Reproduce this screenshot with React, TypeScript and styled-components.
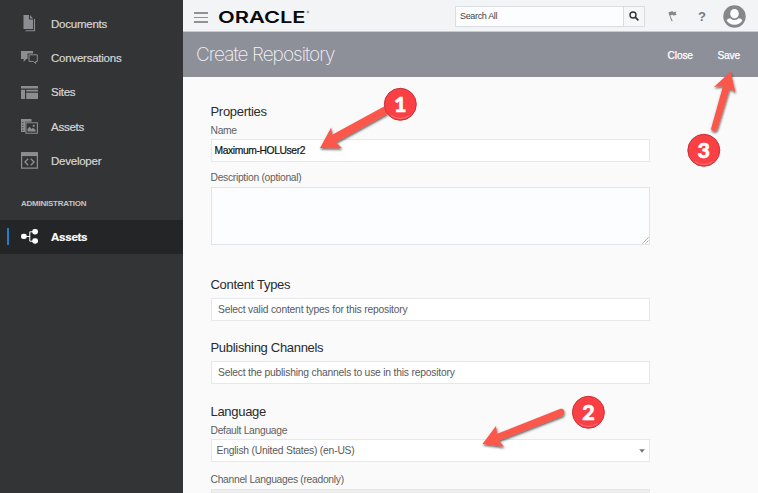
import React from 'react';
import styled, { createGlobalStyle, css } from 'styled-components';

const GlobalStyle = createGlobalStyle`
  * { box-sizing: border-box; }
  body { margin: 0; overflow: hidden; }
`;

const Page = styled.div`
  position: relative;
  display: flex;
  width: 758px;
  height: 493px;
  overflow: hidden;
  background: #fafafa;
  font-family: 'Liberation Sans', Arial, sans-serif;
`;

const Sidebar = styled.nav`
  width: 183px;
  flex: none;
  padding-top: 6.5px;
  background: #333435;
`;

const NavItem = styled.div<{ $active?: boolean }>`
  display: flex;
  align-items: center;
  height: 34.3px;
  color: #d6d6d7;
  font-size: 11.5px;
  letter-spacing: -0.24px;
  -webkit-text-stroke: 0.2px currentColor;
  ${(p) =>
    p.$active &&
    css`
      height: 34px;
      background: #242526;
      color: #fff;
      font-weight: bold;
    `}
`;

const Marker = styled.span<{ $on?: boolean }>`
  width: 2px;
  height: 17px;
  margin: 0 12px 0 7px;
  background: ${(p) => (p.$on ? '#2a7cc7' : 'transparent')};
`;

const IconBox = styled.span`
  display: flex;
  width: 17px;
  height: 17px;
  margin-right: 13px;
  svg { display: block; }
`;

const NavHeading = styled.div`
  height: 42px;
  padding: 21.5px 0 0 21px;
  color: #c4c5c6;
  font-size: 8px;
  line-height: 10px;
  font-weight: bold;
  letter-spacing: -0.25px;
`;

const Main = styled.main`
  flex: 1;
  display: flex;
  flex-direction: column;
  min-width: 0;
`;

const TopBar = styled.header`
  display: flex;
  align-items: center;
  height: 32px;
  flex: none;
  padding: 1px 12px 0 11px;
  background: #f3f4f6;
  border-bottom: 1px solid #c8cacf;
`;

const Menu = styled.div`
  display: flex;
  flex-direction: column;
  gap: 3px;
  width: 14px;
  margin: 3px 10px 0 0;
`;

const MenuLine = styled.span`
  height: 1.4px;
  background: #909296;
`;

const Brand = styled.div`
  display: flex;
  width: 237px;
  flex: none;
`;

const SearchBox = styled.div`
  display: flex;
  width: 190px;
  height: 21px;
  flex: none;
  background: #fcfdfe;
  border: 1px solid #d9dde1;
`;

const SearchText = styled.span`
  flex: 1;
  padding-left: 4px;
  color: #414447;
  font-size: 9px;
  line-height: 18px;
  letter-spacing: -0.34px;
`;

const SearchButton = styled.span`
  display: flex;
  align-items: center;
  justify-content: center;
  width: 21px;
  border-left: 1px solid #d9dde1;
  background: #f6f7f8;
`;

const TopIcons = styled.div`
  display: flex;
  align-items: center;
  flex: 1;
  justify-content: flex-end;
`;

const Help = styled.span`
  width: 8px;
  margin: 1px 17px 0 21px;
  color: #77797c;
  font-size: 13px;
  line-height: 14px;
  font-weight: bold;
`;

const TitleBar = styled.div`
  display: flex;
  align-items: center;
  height: 45px;
  flex: none;
  padding: 0 18px 0 13px;
  background: #8d8f99;
  color: #f4f4f6;
`;

const Title = styled.h1`
  flex: 1;
  margin: 0;
  font-family: Inter, 'Liberation Sans', sans-serif;
  font-size: 19px;
  font-weight: 200;
  line-height: 26px;
  letter-spacing: -0.95px;
  white-space: nowrap;
`;

const Action = styled.span`
  margin: 1px 0 0 24.5px;
  color: #fff;
  font-size: 10.2px;
  letter-spacing: -0.15px;
  -webkit-text-stroke: 0.25px currentColor;
`;

const Form = styled.section`
  width: 467px;
  padding: 27px 0 0 27.5px;
`;

const Heading = styled.h2<{ $gap?: number }>`
  margin: ${(p) => p.$gap ?? 0}px 0 0;
  color: #2a2b2c;
  font-size: 13px;
  font-weight: normal;
  line-height: 16px;
  letter-spacing: -0.3px;
`;

const Label = styled.div<{ $gap?: number }>`
  margin-top: ${(p) => p.$gap ?? 3}px;
  color: #5e5f61;
  font-size: 10.3px;
  line-height: 15px;
  padding-bottom: 1px;
  letter-spacing: -0.29px;
`;

const Field = styled.div<{ $inset?: number; $gap?: number; $dark?: boolean; $readonly?: boolean }>`
  display: flex;
  align-items: center;
  justify-content: space-between;
  height: 23px;
  margin-top: ${(p) => p.$gap ?? 0}px;
  padding: 0 4px 0 ${(p) => p.$inset ?? 3}px;
  background: ${(p) => (p.$readonly ? '#eee' : '#fff')};
  border: 1px solid #e6e8ea;
  color: ${(p) => (p.$dark ? '#111' : '#58595b')};
  font-size: 10.3px;
  letter-spacing: ${(p) => (p.$dark ? '-0.38px' : '-0.2px')};
  -webkit-text-stroke: ${(p) => (p.$dark ? '0.2px' : '0')} currentColor;
`;

const TextArea = styled.div`
  display: flex;
  align-items: flex-end;
  justify-content: flex-end;
  height: 58px;
  margin-top: 1px;
  padding: 0;
  background: #fcfdfe;
  border: 1px solid #e2e5e8;
`;

const Overlay = styled.svg`
  position: absolute;
  inset: 0;
  pointer-events: none;
`;

const G = '#8b8d90';

const DocumentsIcon = () => (
  <svg width="17" height="17" viewBox="0 0 17 17">
    <path d="M2.5 0H8v4.5h4V14H2.5zM9 0l3 3.5H9z" fill={G} />
    <path d="M13.5 4v11.8H4.5" fill="none" stroke={G} strokeWidth="1.1" />
  </svg>
);

const ConversationsIcon = () => (
  <svg width="17" height="17" viewBox="0 0 17 17">
    <path d="M0 2h12v2.6H6.6v5.3H5.3L2.7 13V9.9H0z" fill={G} />
    <path d="M8 5.8h8.3v6.6h-1.7v2.2l-2.2-2.2H8z" fill="none" stroke={G} strokeWidth="1" />
  </svg>
);

const SitesIcon = () => (
  <svg width="17" height="17" viewBox="0 0 17 17">
    <path d="M0 2h17v2.5H0zM0 5.7h4V15H0zM5.2 5.7H17v1.8H5.2zM5.2 8.7H17V15H5.2z" fill={G} />
  </svg>
);

const AssetsIcon = () => (
  <svg width="17" height="17" viewBox="0 0 17 17">
    <path d="M0 1h10.5v2.8H4.2V14H0z" fill={G} />
    <path d="M1.8 4v9" stroke="#333435" strokeWidth="1" strokeDasharray="1 1.6" />
    <path d="M4.9 4.7h11.5v10.6H4.9z" fill="#333435" stroke={G} strokeWidth="1.1" />
    <path d="M6.5 13.5V11l2-2.3 2 2.3 1.5-1.2 2.7 2.2v1.5z" fill={G} />
    <circle cx="12.7" cy="7.8" r="1.1" fill={G} />
  </svg>
);

const DeveloperIcon = () => (
  <svg width="17" height="17" viewBox="0 0 17 17">
    <path d="M.6.8h15.8v15.4H.6z" fill="none" stroke={G} strokeWidth="1.2" />
    <path d="M0 .2h17v3.9H0z" fill={G} />
    <path d="M7.2 6.8 4 10l3.2 3.2M9.8 6.8 13 10l-3.2 3.2" fill="none" stroke={G} strokeWidth="1.4" />
  </svg>
);

const NodesIcon = () => (
  <svg width="17" height="17" viewBox="0 0 17 17">
    <path d="M3 8.5h6M14 3.8H8.8v9.4H14" fill="none" stroke="#fff" strokeWidth="1" />
    <rect x="0" y="5.7" width="5.8" height="5.4" rx="2.4" fill="#fff" />
    <rect x="11.2" y="1" width="5.8" height="5.4" rx="2.4" fill="#fff" />
    <rect x="11.2" y="10.3" width="5.8" height="5.4" rx="2.4" fill="#fff" />
  </svg>
);

const navItems = [
  { label: 'Documents', icon: <DocumentsIcon /> },
  { label: 'Conversations', icon: <ConversationsIcon /> },
  { label: 'Sites', icon: <SitesIcon /> },
  { label: 'Assets', icon: <AssetsIcon /> },
  { label: 'Developer', icon: <DeveloperIcon /> },
];

const badges = [
  { n: '1', x: 400.3, y: 104.3 },
  { n: '2', x: 588.4, y: 412.3 },
  { n: '3', x: 703.8, y: 150.3 },
];

const arrows = [
  'M320 148 331.2 127.5 332.2 134.8 384 106.5 388 113.5 336 142.3 342 148.3z',
  'M482.5 444 496 426 497.2 433.8 560.5 408.8Q564.5 408 564.3 413L563 415.8 499 440.5 504 446.8z',
  'M730.5 71.5 735.5 92.5 729.8 88.2 717.3 129.5Q714 133.5 711 129L723 86 714 87z',
];

const Annotations = () => (
  <Overlay width="758" height="493" viewBox="0 0 758 493">
    <defs>
      <filter id="shadow" x="-20%" y="-20%" width="140%" height="140%">
        <feDropShadow dx="0.5" dy="1.5" stdDeviation="0.8" floodColor="#000" floodOpacity="0.65" />
      </filter>
    </defs>
    {arrows.map((d) => (
      <path key={d} d={d} fill="#fb584c" filter="url(#shadow)" />
    ))}
    {badges.map((b) => (
      <g key={b.n}>
        <circle cx={b.x} cy={b.y} r="16" fill="#fb4045" stroke="#c53238" strokeWidth="1" />
        <path
          d={`M${b.x - 9} ${b.y + 11.3}Q${b.x} ${b.y + 17} ${b.x + 9} ${b.y + 11.3}`}
          fill="none"
          stroke="#ff8588"
          strokeWidth="0.8"
        />
        <text
          x={b.x}
          y={b.y + 7.9}
          textAnchor="middle"
          fill="#fff"
          stroke="#fff"
          strokeWidth="0.6"
          fontFamily="Lato, sans-serif"
          fontWeight="900"
          fontSize="21.5"
        >
          {b.n}
        </text>
      </g>
    ))}
  </Overlay>
);

export default function App() {
  return (
    <Page>
      <GlobalStyle />
      <Sidebar>
        {navItems.map((item) => (
          <NavItem key={item.label}>
            <Marker />
            <IconBox>{item.icon}</IconBox>
            {item.label}
          </NavItem>
        ))}
        <NavHeading>ADMINISTRATION</NavHeading>
        <NavItem $active>
          <Marker $on />
          <IconBox><NodesIcon /></IconBox>
          Assets
        </NavItem>
      </Sidebar>
      <Main>
        <TopBar>
          <Menu><MenuLine /><MenuLine /><MenuLine /></Menu>
          <Brand>
            <svg width="94" height="24" viewBox="0 0 94 24">
              <text x="0" y="18.8" textLength="87.5" lengthAdjust="spacingAndGlyphs" fontFamily="Inter, sans-serif" fontWeight="600" fontSize="16" fill="#0a0a0a">ORACLE</text>
              <circle cx="90" cy="8" r="0.9" fill="none" stroke="#444" strokeWidth="0.5" />
            </svg>
          </Brand>
          <SearchBox>
            <SearchText>Search All</SearchText>
            <SearchButton>
              <svg width="10" height="10" viewBox="0 0 10 10" fill="none" stroke="#333" strokeWidth="1.4">
                <circle cx="4" cy="4" r="3" />
                <path d="m6.2 6.2 3.2 3.2" strokeWidth="1.7" />
              </svg>
            </SearchButton>
          </SearchBox>
          <TopIcons>
            <svg width="9" height="12" viewBox="0 0 9 12">
              <path d="M.3 2.5 4.5 1 5 2.2 8.3 1.5 7.6 3.2 8.6 5 5 5.5 4.4 4.8 2.2 5.5 4.7 11l-1.2.3z" fill="#85878a" />
            </svg>
            <Help>?</Help>
            <svg width="23" height="23" viewBox="0 0 23 23">
              <circle cx="11.5" cy="11.5" r="11.2" fill="#85878a" />
              <ellipse cx="11.5" cy="8.7" rx="4.3" ry="4.8" fill="#fff" />
              <path d="M3.5 15.2Q5 13.4 7.2 13.2 11.5 17 15.8 13.2 18 13.4 19.5 15.2 17 19.6 11.5 19.8 6 19.6 3.5 15.2z" fill="#fff" />
            </svg>
          </TopIcons>
        </TopBar>
        <TitleBar>
          <Title>Create Repository</Title>
          <Action>Close</Action>
          <Action>Save</Action>
        </TitleBar>
        <Form>
          <Heading>Properties</Heading>
          <Label>Name</Label>
          <Field $dark>Maximum-HOLUser2</Field>
          <Label $gap={8}>Description (optional)</Label>
          <TextArea>
            <svg width="7" height="7" viewBox="0 0 7 7">
              <path d="M0.5 6.5l6-6M3.5 6.5l3-3" stroke="#777" strokeWidth="0.8" strokeDasharray="1.4 0.5" />
            </svg>
          </TextArea>
          <Heading $gap={32}>Content Types</Heading>
          <Field $gap={5} $inset={6.5}>Select valid content types for this repository</Field>
          <Heading $gap={19}>Publishing Channels</Heading>
          <Field $gap={5} $inset={6.5}>Select the publishing channels to use in this repository</Field>
          <Heading $gap={20}>Language</Heading>
          <Label>Default Language</Label>
          <Field $inset={5}>
            English (United States) (en-US)
            <svg width="6" height="4" viewBox="0 0 6 4"><path d="M.2.2h5.6L3 3.8z" fill="#777" /></svg>
          </Field>
          <Label $gap={10}>Channel Languages (readonly)</Label>
          <Field $gap={1} $readonly />
        </Form>
      </Main>
      <Annotations />
    </Page>
  );
}
